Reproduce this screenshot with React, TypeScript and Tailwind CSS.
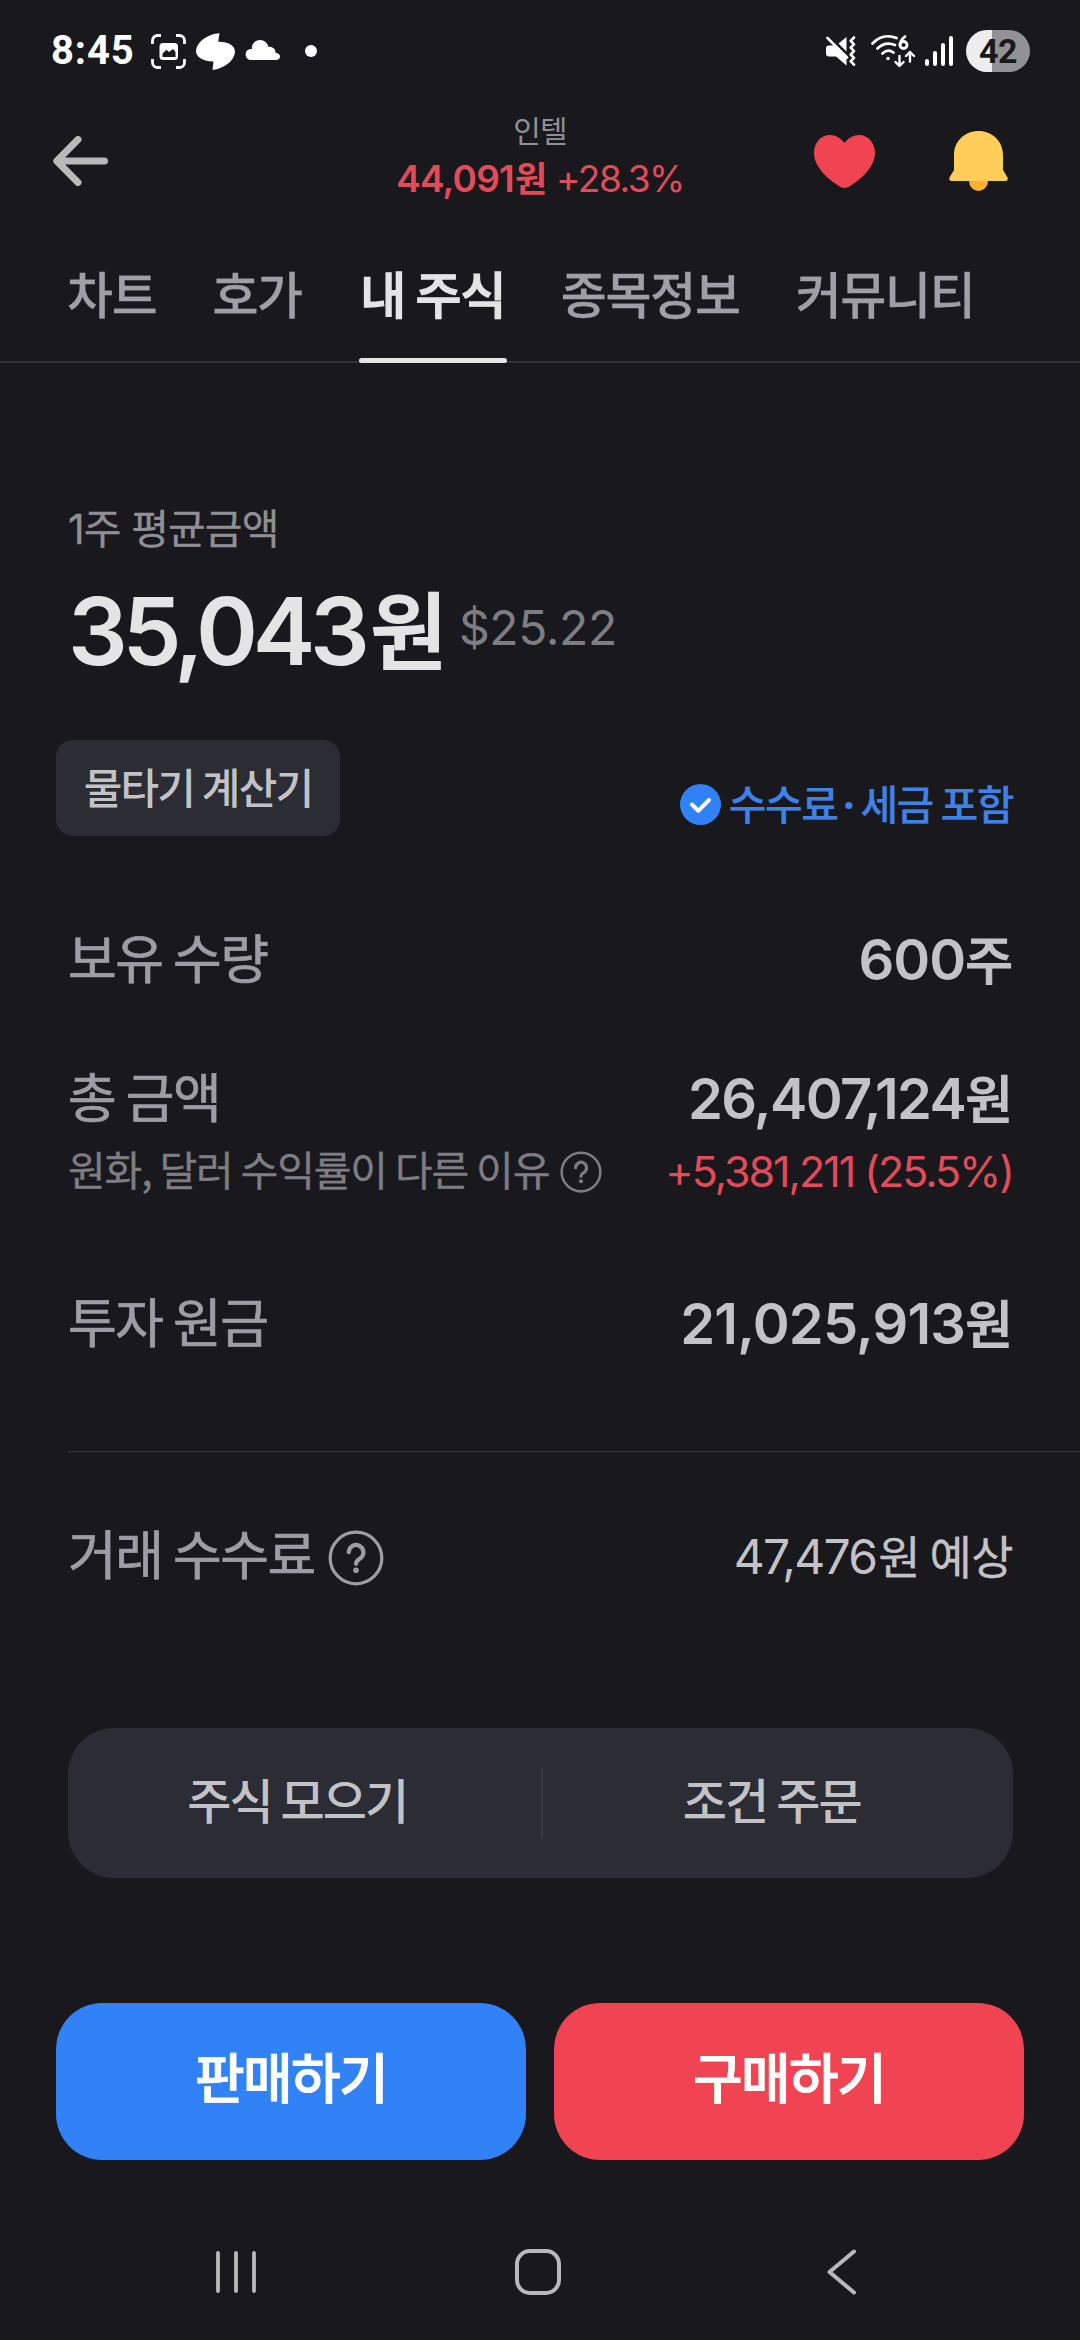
import React from "react";

const KR = "font-['Noto_Sans_CJK_KR',sans-serif]";
const NUM = "font-['Inter','Noto_Sans_CJK_KR',sans-serif]";

function StatusBar() {
  return (
    <div className="flex h-[102px] items-center pl-[51px] pr-[50px] text-white">
      <span className="w-[100px] font-['Roboto',sans-serif] text-[40px] font-bold leading-[50px] tracking-[0.9px]">8:45</span>
      <svg className="h-[35px] w-[35px]" viewBox="0 0 35 35" fill="none">
        <path d="M1.5 10V6.5a5 5 0 0 1 5-5H10M25 1.5h3.5a5 5 0 0 1 5 5V10M33.5 25v3.5a5 5 0 0 1-5 5H25M10 33.5H6.5a5 5 0 0 1-5-5V25" stroke="#fff" strokeWidth="2.8" />
        <rect x="8.5" y="9" width="18.5" height="17" rx="3.5" fill="#fff" />
        <path d="M11.5 23v-3.5l4-3.8 2.5 2.3 4-3 2.5 3V23Z" fill="#19181d" />
      </svg>
      <svg className="ml-2.5 h-[37px] w-[39px]" viewBox="0 0 39 37">
        <path d="M23.500 0.300L22.200 8.700C32 8.400 39 12.500 39 18.500C38.500 28 28 35.500 16.500 37L17.500 28.500C7 28.500 0 24 0 18C1 8.500 12 1 23.500 0.300Z" fill="#fff" />
      </svg>
      <svg className="-mt-0.5 ml-2.5 h-[20px] w-[35px]" viewBox="0 0 35 20">
        <path d="M5.500 20a5.500 5.500 0 0 1-1-10.700 6 6 0 0 1 2.600-.2C6 4 10 0 15 0c4.500 0 7.500 3 8.300 6.700 4-.5 7.200 2 7.200 5.300v.7c3 .2 4.500 1.800 4.500 3.800 0 2.200-1.600 3.500-3.800 3.500Z" fill="#fff" />
      </svg>
      <span className="ml-[25px] h-3 w-3 rounded-full bg-white" />

      <svg className="ml-auto h-[30px] w-[30px]" viewBox="0 0 30 30" fill="none">
        <path d="M1.500 2L21 21.500" stroke="#fff" strokeWidth="2.600" strokeLinecap="round" />
        <path d="M3 9.500h4.500L20.500 22v7.500L10 20.500H3a3 3 0 0 1-3-3v-5a3 3 0 0 1 3-3Z" fill="#fff" />
        <path d="M12.500 7.500L20.500 1v14.500Z" fill="#fff" />
        <path d="M28 1.500l-3.300 3.400 3.300 3.400-3.300 3.400 3.300 3.400-3.300 3.400 3.300 3.400-3.300 3.400 3.300 3.400" stroke="#fff" strokeWidth="2.600" strokeLinejoin="round" strokeLinecap="round" />
      </svg>
      <svg className="ml-[15px] h-[34px] w-[44px]" viewBox="0 0 44 34" fill="none" stroke="#fff" strokeWidth="2.700" strokeLinecap="round" strokeLinejoin="round">
        <path d="M1.500 9.500C8 2.500 17 .5 25.500 4M6.500 14.500C11 10 17.500 8.300 24 11M11.500 19.500c3.500-3.300 7.500-3.600 11-1" />
        <circle cx="17" cy="24.500" r="1" fill="#fff" strokeWidth="1.500" />
        <path d="M34 2.500c-3 2.500-5 5.500-5 8.500" strokeWidth="2.800" />
        <circle cx="32.500" cy="11" r="3.500" strokeWidth="2.800" />
        <path d="M28.500 22v9.500M24.500 28l4 4 4-4M39 27.500V18M35 22l4-4 4 4" strokeWidth="2.400" />
      </svg>
      <div className="ml-2.5 flex h-[30px] items-end gap-[4px]">
        <span className="h-[7px] w-[4px] rounded-full bg-white" />
        <span className="h-[15px] w-[4px] rounded-full bg-white" />
        <span className="h-[23px] w-[4px] rounded-full bg-white" />
        <span className="h-[30px] w-[4px] rounded-full bg-white" />
      </div>
      <div className="ml-[13px] flex h-[42px] w-[64px] items-center justify-center rounded-full bg-[linear-gradient(90deg,#ededed_41%,#929294_41%)]">
        <span className="font-['Roboto',sans-serif] text-[34px] font-bold leading-[42px] tracking-[-0.5px] text-[#19181d]">42</span>
      </div>
    </div>
  );
}

function Header() {
  return (
    <header className="grid h-[118px] grid-cols-[1fr_auto_1fr] pl-[53px] pr-[72px]">
      <svg className="mt-[34px] h-[50px] w-[56px]" viewBox="0 0 56 50" fill="none" stroke="#b9b9b9" strokeWidth="7" strokeLinecap="round" strokeLinejoin="round">
        <path d="M51.500 25H5M25 3.500L3.800 25L25 46.500" />
      </svg>
      <div className="ml-[19px] flex flex-col items-center pt-[7px]">
        <span className={`${KR} text-[30px] leading-[40px] tracking-[-0.8px] text-[#918f96]`}>인텔</span>
        <div className={`${NUM} mt-[5px] flex text-[37px] leading-[50px] text-[#e34b5a]`}>
          <span className="font-semibold tracking-[-0.8px]">44,091</span>
          <span className="ml-px text-[35px] font-bold">원</span>
          <span className="ml-[9px] tracking-[-1.500px]">+28.3%</span>
        </div>
      </div>
      <div className="flex justify-end">
        <svg className="mt-[33px] h-[53px] w-[61px]" viewBox="0 0 61 53">
          <path d="M30.500 8C34 3 39.500 0 45 0C54.500 0 61 8 61 18C61 31 49 43 34.500 52Q30.500 54 26.500 52C12 43 0 31 0 18C0 8 6.500 0 16 0C21.500 0 27 3 30.500 8Z" fill="#f04452" />
        </svg>
        <svg className="ml-[74px] mt-[29px] h-[60px] w-[59px]" viewBox="0 0 59 60">
          <path d="M20 46h19v4a9.500 10 0 0 1-19 0Z" fill="#ffb134" />
          <path d="M29.500 0C43 0 54 10 54 24V39L58.500 46.500Q59.500 50 56.500 50H2.500Q-.5 50 .5 46.500L5 39V24C5 10 16 0 29.500 0Z" fill="#ffcd59" />
        </svg>
      </div>
    </header>
  );
}

function Tab({ children }: { children: React.ReactNode }) {
  return <span className="font-medium tracking-[-1.300px] [-webkit-text-stroke:0.3px]">{children}</span>;
}

function Tabs() {
  return (
    <nav className={`${KR} flex h-[143px] gap-[56px] whitespace-nowrap border-b-2 border-[#323138] pl-[67px] pt-[42px] text-[50px] leading-[60px] text-[#a09fa6]`}>
      <Tab>차트</Tab>
      <Tab>호가</Tab>
      <span className="relative -mr-[2px] ml-px w-[148px] text-center font-medium tracking-[-1px] text-[#e4e4e5] [-webkit-text-stroke:1.3px]">
        내 주식
        <span className="absolute -bottom-[2px] left-0 h-[5px] w-full rounded-full bg-[#e4e4e5]" />
      </span>
      <Tab>종목정보</Tab>
      <Tab>커뮤니티</Tab>
    </nav>
  );
}

function Help({ className, sw }: { className: string; sw: number }) {
  return (
    <svg className={className} viewBox="0 0 56 56" fill="none" stroke="currentColor" strokeLinecap="round" strokeLinejoin="round">
      <circle cx="28" cy="28" r="25.800" strokeWidth={sw} />
      <path d="M20.800 22.200a7.300 7.300 0 1 1 11.600 6c-2.700 1.900-4.400 2.800-4.400 5.600" strokeWidth="4.200" />
      <circle cx="28" cy="40.300" r="2.800" fill="currentColor" stroke="none" />
    </svg>
  );
}

const LABEL = `${KR} text-[53px] leading-[70px] tracking-[-1.500px] text-[#9e9da3] [-webkit-text-stroke:0.7px]`;
const VALUE = `${NUM} mt-[4px] flex text-[56px] font-semibold leading-[70px] text-[#c3c2c7]`;
const UNIT = "text-[52px] font-medium leading-[73px] [-webkit-text-stroke:1px]";

export default function App() {
  return (
    <div className="h-[2340px] w-[1080px] overflow-hidden whitespace-nowrap bg-[#19181d]">
      <StatusBar />
      <Header />
      <Tabs />
      <main className="pt-[141px]">
        <section className="pl-[68px] pr-[67px]">
          <p className={`${NUM} text-[41px] leading-[50px] tracking-[-0.900px] text-[#918f96] [-webkit-text-stroke:0.3px]`}>1주 평균금액</p>
          <div className={`${NUM} mt-[27px] flex h-[100px] items-start`}>
            <span className="text-[94px] font-semibold leading-[100px] tracking-[-5.300px] text-[#e4e4e5]">35,043</span>
            <span className="ml-[6px] text-[84px] font-medium leading-[103px] text-[#e4e4e5] [-webkit-text-stroke:2px]">원</span>
            <span className="ml-[11px] text-[48px] leading-[93px] tracking-[-0.400px] text-[#7e7d84]">$25.22</span>
          </div>
          <div className="mt-[59px] flex h-[96px] items-start justify-between">
            <button className={`${KR} -ml-[12px] flex h-[96px] w-[284px] items-center justify-center rounded-[17px] bg-[#2c2c34] pb-[4px] text-[42px] font-medium leading-[50px] tracking-[-1.800px] text-[#c3c2c7]`}>물타기 계산기</button>
            <div className={`${KR} mt-[37px] flex text-[41px] font-medium leading-[50px] tracking-[-1.500px] text-[#3f82e6] [-webkit-text-stroke:0.2px]`}>
              <svg className="mr-[8px] mt-[7px] h-[41px] w-[41px]" viewBox="0 0 41 41" fill="none">
                <circle cx="20.500" cy="20.500" r="20.500" fill="#3182f6" />
                <path d="M12 20.500l6.300 6.300L29 16" stroke="#fff" strokeWidth="4" strokeLinecap="round" strokeLinejoin="round" />
              </svg>
              <span>수수료</span>
              <span className="w-[23px] pt-[3px] text-center font-['Inter'] font-bold tracking-normal">·</span>
              <span>세금 포함</span>
            </div>
          </div>

          <div className="mt-[85px] flex h-[70px] justify-between">
            <span className={LABEL}>보유 수량</span>
            <div className={VALUE}>
              <span className="tracking-[-1px]">600</span>
              <span className={UNIT}>주</span>
            </div>
          </div>

          <div className="mt-[69px] flex h-[70px] justify-between">
            <span className={LABEL}>총 금액</span>
            <div className={VALUE}>
              <span className="tracking-[-1.600px]">26,407,124</span>
              <span className={UNIT}>원</span>
            </div>
          </div>
          <div className="mt-[13px] flex h-[50px] justify-between">
            <div className="flex text-[#7e7d84]">
              <span className={`${KR} text-[41px] leading-[50px] tracking-[-1.150px] [-webkit-text-stroke:0.3px]`}>원화, 달러 수익률이 다른 이유</span>
              <Help className="ml-[11px] mt-[8px] h-[42px] w-[42px]" sw={3.4} />
            </div>
            <span className={`${NUM} mt-[3px] text-[43px] leading-[50px] tracking-[-2px] text-[#e34b5a]`}>+5,381,211 (25.5%)</span>
          </div>

          <div className="mt-[92px] flex h-[70px] justify-between">
            <span className={LABEL}>투자 원금</span>
            <div className={VALUE}>
              <span className="tracking-[-0.800px]">21,025,913</span>
              <span className={UNIT}>원</span>
            </div>
          </div>
        </section>

        <div className="ml-[68px] mt-[96px] h-px bg-[#36353b]" />

        <section className="pl-[68px] pr-[67px] pt-[65px]">
          <div className="flex h-[70px] justify-between">
            <div className="flex text-[#9e9da3]">
              <span className={LABEL}>거래 수수료</span>
              <Help className="ml-[13px] mt-[13px] h-[56px] w-[56px]" sw={3.2} />
            </div>
            <div className={`${NUM} mt-[5px] flex text-[48px] leading-[70px] text-[#c3c2c7]`}>
              <span className="tracking-[-1.800px]">47,476</span>
              <span className="ml-[2px] font-['Noto_Sans_CJK_KR',sans-serif] text-[46px] leading-[65px] tracking-[-0.600px] [-webkit-text-stroke:0.3px]">원 예상</span>
            </div>
          </div>
          <div className={`${KR} mt-[141px] flex h-[150px] items-center rounded-[46px] bg-[#2c2c34] text-[48px] font-medium leading-[60px] tracking-[-1.900px] text-[#c3c2c7]`}>
            <span className="flex-1 pb-[10px] pr-[14px] text-center">주식 모으기</span>
            <span className="h-[71px] w-[2px] bg-[#373840]" />
            <span className="flex-1 pb-[10px] pr-[12px] text-center">조건 주문</span>
          </div>
        </section>

        <div className={`${KR} mt-[125px] flex h-[157px] gap-[28px] px-[56px] text-[54px] font-medium tracking-[-1.700px] text-white [-webkit-text-stroke:0.9px]`}>
          <button className="flex-1 rounded-[46px] bg-[#3182f6] pb-[12px]">판매하기</button>
          <button className="flex-1 rounded-[46px] bg-[#f04452] pb-[12px]">구매하기</button>
        </div>
      </main>

      <footer className="flex items-center pl-[215px] pt-[89px]">
        <svg className="h-[46px] w-[42px]" viewBox="0 0 42 46" stroke="#b9b9b9" strokeWidth="3.800" strokeLinecap="round">
          <path d="M3 4v38M21 4v38M39 4v38" />
        </svg>
        <svg className="ml-[258px] h-[46px] w-[46px]" viewBox="0 0 46 46" fill="none" stroke="#b9b9b9" strokeWidth="4">
          <rect x="2" y="2" width="42" height="42" rx="13" />
        </svg>
        <svg className="ml-[266px] h-[46px] w-[30px]" viewBox="0 0 30 46" fill="none" stroke="#b9b9b9" strokeWidth="4" strokeLinecap="round" strokeLinejoin="round">
          <path d="M27 2.500L2.500 23L27 43.500" />
        </svg>
      </footer>
    </div>
  );
}
